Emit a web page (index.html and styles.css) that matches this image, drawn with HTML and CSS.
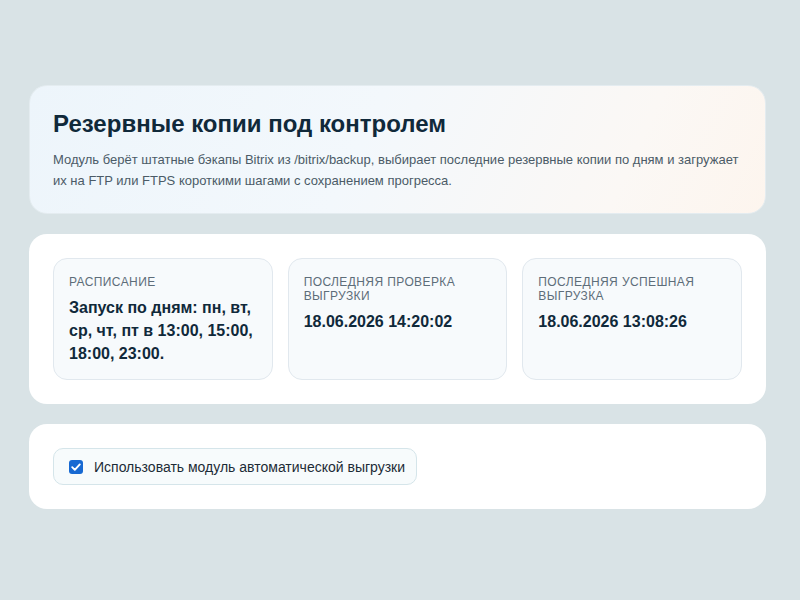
FILE: index.html
```html
<!DOCTYPE html>
<html lang="ru">
<head>
<meta charset="utf-8">
<link rel="stylesheet" href="styles.css">
</head>
<body>
<main class="page">
  <section class="card hero">
    <h1 class="hero-title">Резервные копии под контролем</h1>
    <p class="hero-text">Модуль берёт штатные бэкапы Bitrix из /bitrix/backup, выбирает последние резервные копии по дням и загружает их на FTP или FTPS короткими шагами с сохранением прогресса.</p>
  </section>
  <section class="card">
    <div class="stats">
      <div class="stat">
        <div class="stat-label">Расписание</div>
        <div class="stat-value">Запуск по дням: пн, вт, ср, чт, пт в 13:00, 15:00, 18:00, 23:00.</div>
      </div>
      <div class="stat">
        <div class="stat-label">Последняя проверка выгрузки</div>
        <div class="stat-value">18.06.2026 14:20:02</div>
      </div>
      <div class="stat">
        <div class="stat-label">Последняя успешная выгрузка</div>
        <div class="stat-value">18.06.2026 13:08:26</div>
      </div>
    </div>
  </section>
  <section class="card">
    <label class="toggle">
      <span class="check"><svg viewBox="0 0 14 14" width="14" height="14"><path d="M3.2 7.2 L5.8 9.8 L10.8 4.4" fill="none" stroke="#fff" stroke-width="1.9" stroke-linecap="round" stroke-linejoin="round"/></svg></span>
      <span class="toggle-text">Использовать модуль автоматической выгрузки</span>
    </label>
  </section>
</main>
</body>
</html>
```

FILE: styles.css
```css
html, body {
  margin: 0;
  padding: 0;
}
body {
  background: #d9e3e6;
  font-family: "Liberation Sans", Arial, sans-serif;
  color: #10293a;
  width: 800px;
  height: 600px;
}
.page {
  width: 737px;
  margin-left: 29px;
  padding-top: 85px;
  display: flex;
  flex-direction: column;
  gap: 20px;
}
.card {
  background: #ffffff;
  border-radius: 18px;
  padding: 24px;
}
.hero {
  background: linear-gradient(115deg, #edf5fb 0%, #f3f8fc 45%, #fbf8f5 80%, #fdf5ee 100%);
  border: 1px solid #e4ecf0;
  padding: 23px 23px 22px;
}
.hero-title {
  margin: 0;
  font-size: 24px;
  line-height: 30px;
  font-weight: 700;
  color: #10293a;
}
.hero-text {
  margin: 10px 0 0;
  font-size: 13px;
  line-height: 21px;
  color: #4b5b67;
}
.stats {
  display: grid;
  grid-template-columns: 1fr 1fr 1fr;
  gap: 15px;
}
.stat {
  background: #f7fafc;
  border: 1px solid #e1e8ee;
  border-radius: 14px;
  padding: 16px 15px 14px;
}
.stat-label {
  font-size: 12px;
  line-height: 14px;
  text-transform: uppercase;
  letter-spacing: 0.4px;
  color: #5d6d79;
}
.stat-value {
  margin-top: 7px;
  font-size: 16px;
  line-height: 23px;
  font-weight: 700;
  color: #10293a;
}
.toggle {
  box-sizing: border-box;
  display: inline-flex;
  align-items: center;
  gap: 11px;
  height: 37px;
  padding: 0 11px 0 15px;
  border: 1px solid #d5e5ea;
  border-radius: 10px;
  background: #f7fbfc;
}
.check {
  display: flex;
  align-items: center;
  justify-content: center;
  width: 14px;
  height: 14px;
  border-radius: 3px;
  background: #1769d2;
}
.toggle-text {
  font-size: 14px;
  color: #1c2b36;
}
```
